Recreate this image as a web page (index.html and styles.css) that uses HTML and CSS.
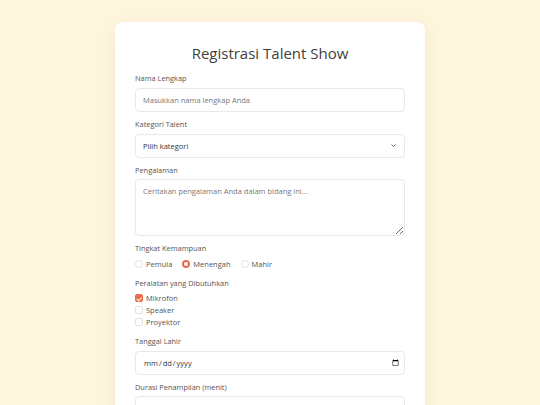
FILE: index.html
```html
<!DOCTYPE html>
<html lang="id">
<head>
  <meta charset="UTF-8" />
  <meta name="viewport" content="width=device-width, initial-scale=1.0"/>
  <title>Registrasi Talent Show</title>
  <link rel="stylesheet" href="styles.css">
</head>
<body>

<div class="container">
  <h2>Registrasi Talent Show</h2>
  <form id="talentForm">
    <div class="form-group">
      <label for="nama">Nama Lengkap</label>
      <input type="text" id="nama" placeholder="Masukkan nama lengkap Anda" />
    </div>
    <div class="form-group">
      <label for="kategori">Kategori Talent</label>
      <div class="select-wrap">
        <select id="kategori">
          <option value="">Pilih kategori</option>
          <option>Menyanyi</option>
          <option>Menari</option>
          <option>Musik</option>
          <option>Komedi</option>
        </select>
        <svg class="chevron" viewBox="0 0 10 6" width="5" height="3"><path d="M1 1l4 4 4-4" fill="none" stroke="#444" stroke-width="1.6"/></svg>
      </div>
    </div>
    <div class="form-group">
      <label for="pengalaman">Pengalaman</label>
      <textarea id="pengalaman" placeholder="Ceritakan pengalaman Anda dalam bidang ini..."></textarea>
    </div>
    <div class="form-group">
      <label>Tingkat Kemampuan</label>
      <div class="radio-row">
        <label class="option"><input type="radio" name="level" /> Pemula</label>
        <label class="option"><input type="radio" name="level" checked /> Menengah</label>
        <label class="option"><input type="radio" name="level" /> Mahir</label>
      </div>
    </div>
    <div class="form-group">
      <label>Peralatan yang Dibutuhkan</label>
      <div class="check-list">
        <label class="option"><input type="checkbox" checked /> Mikrofon</label>
        <label class="option"><input type="checkbox" /> Speaker</label>
        <label class="option"><input type="checkbox" /> Proyektor</label>
      </div>
    </div>
    <div class="form-group">
      <label for="lahir">Tanggal Lahir</label>
      <input type="date" id="lahir" />
    </div>
    <div class="form-group">
      <label for="durasi">Durasi Penampilan (menit)</label>
      <input type="number" id="durasi" value="15" />
    </div>
  </form>
</div>

</body>
</html>
```

FILE: styles.css
```css
:root {
  --accent-color: #ea6a4b;
  --text-color: #3f3f3f;
  --border-color: #e8e8e8;
}

* {
  box-sizing: border-box;
  font-family: 'Open Sans', sans-serif;
}

body {
  margin: 0;
  background: #fff6de;
  display: flex;
  justify-content: center;
  align-items: flex-start;
  padding-top: 22px;
  min-height: 100vh;
}

.container {
  background: #ffffff;
  padding: 19px 20px;
  border-radius: 8px;
  width: 310px;
  box-shadow: 0 4px 20px rgba(180, 150, 80, 0.15);
}

h2 {
  text-align: center;
  margin: 0 0 8px;
  font-size: 15px;
  font-weight: 500;
  line-height: 24px;
  color: var(--text-color);
}

.form-group {
  margin-bottom: 7px;
}

label {
  display: block;
  margin-bottom: 4.5px;
  font-size: 7.4px;
  line-height: 10px;
  color: #555;
}

.form-group:first-child label {
  margin-bottom: 5px;
}

input[type="text"],
input[type="number"],
input[type="date"],
select,
textarea {
  display: block;
  width: 100%;
  height: 24px;
  padding: 0 7px;
  font-size: 7.5px;
  color: #333;
  border-radius: 4px;
  border: 1px solid var(--border-color);
  background-color: #fff;
}

input[type="date"]::-webkit-calendar-picker-indicator {
  margin-right: -4px;
}

select {
  appearance: none;
}

.select-wrap {
  position: relative;
}

.chevron {
  position: absolute;
  right: 9px;
  top: 10.5px;
}

textarea {
  height: 57px;
  padding: 6px 7px;
  resize: vertical;
}

::placeholder {
  color: #777;
}

.radio-row {
  display: flex;
  gap: 10px;
  padding-top: 1px;
  padding-bottom: 2px;
}

.check-list {
  display: flex;
  flex-direction: column;
  gap: 2px;
  padding-top: 1px;
  padding-bottom: 2px;
}

.option {
  display: flex;
  align-items: center;
  gap: 3px;
  margin: 0;
  font-size: 7.5px;
  line-height: 10px;
  color: #555;
}

.option input {
  appearance: none;
  margin: 0;
  width: 8px;
  height: 8px;
  border: 1px solid #e2e2e2;
  background: #fff;
}

.option input[type="radio"] {
  border-radius: 50%;
}

.option input[type="radio"]:checked {
  border: 2.2px solid var(--accent-color);
}

.option input[type="checkbox"] {
  border-radius: 2px;
}

.option input[type="checkbox"]:checked {
  border-color: var(--accent-color);
  background: var(--accent-color);
  position: relative;
}

.option input[type="checkbox"]:checked::after {
  content: "";
  position: absolute;
  left: 2px;
  top: 0.5px;
  width: 1.5px;
  height: 3.5px;
  border: solid #fff;
  border-width: 0 1px 1px 0;
  transform: rotate(45deg);
}
```
